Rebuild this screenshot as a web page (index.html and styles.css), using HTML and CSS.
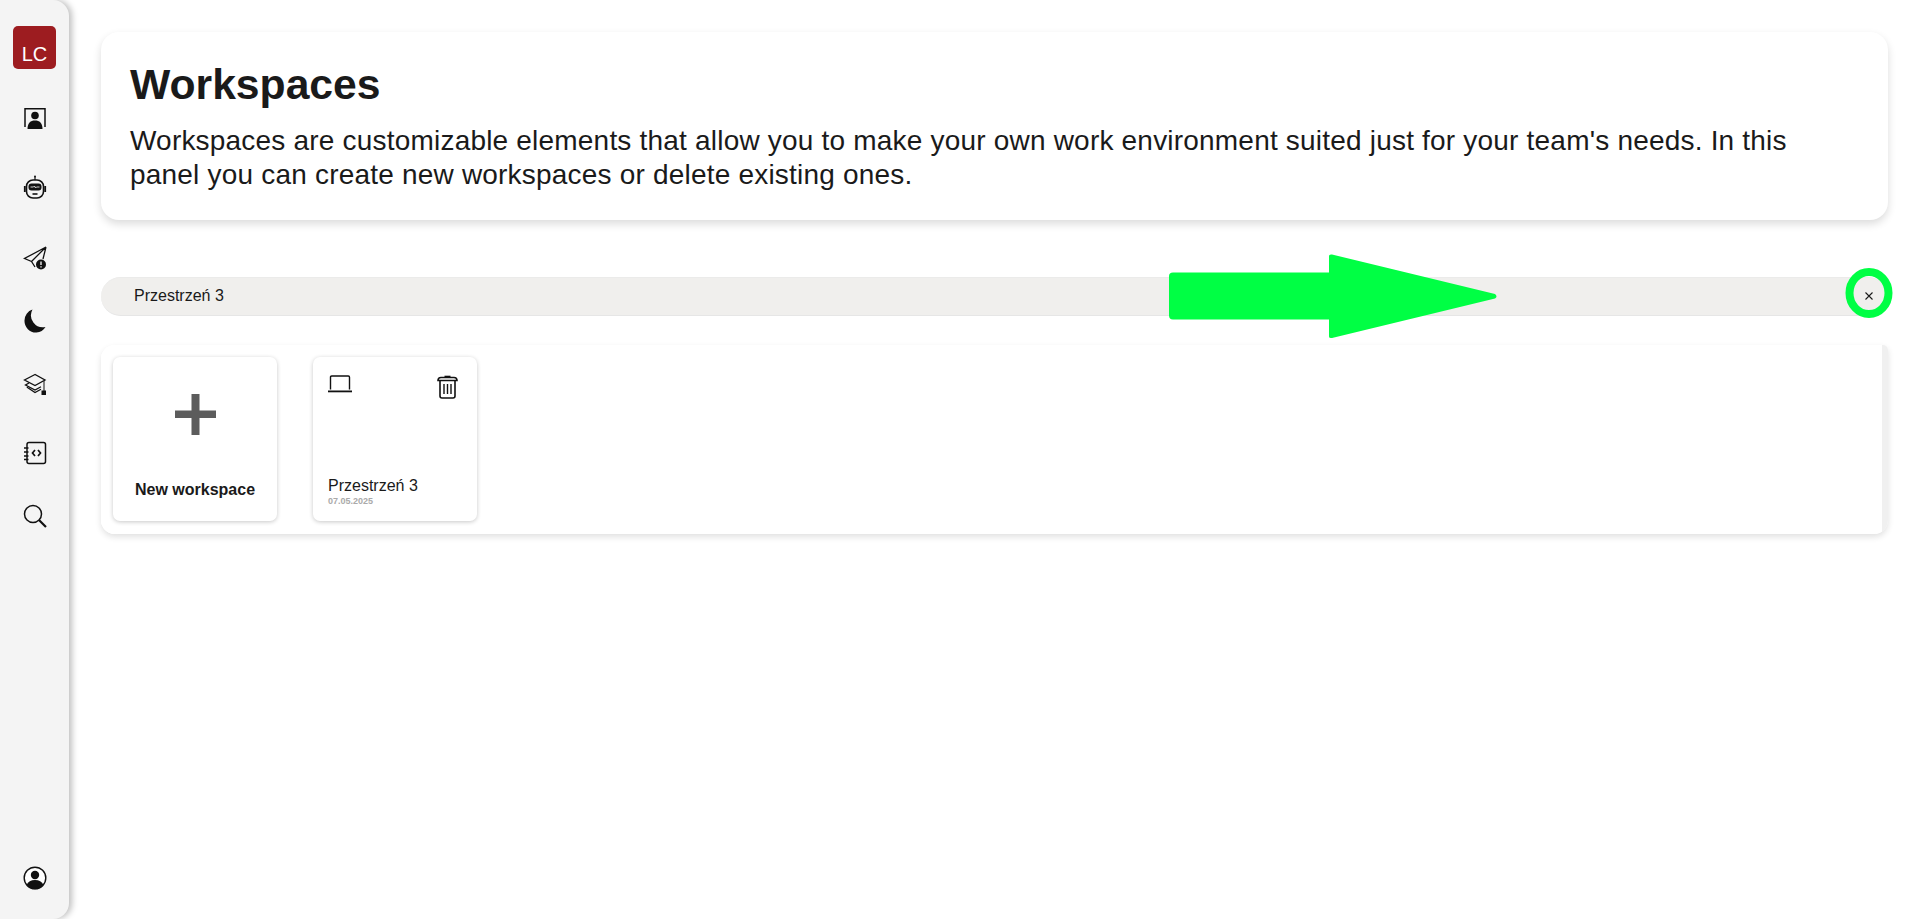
FILE: index.html
```html
<!DOCTYPE html>
<html lang="en">
<head>
<meta charset="utf-8">
<title>Workspaces</title>
<link rel="stylesheet" href="styles.css">
</head>
<body>
<div class="app">
  <nav class="sidebar">
    <div class="nav-top">
      <div class="avatar">LC</div>
      <svg class="nav-icon first" viewBox="0 0 24 24"><path d="M2 21V2.700h20V21" fill="none" stroke="#111" stroke-width="1.500"/><circle cx="12" cy="9.500" r="3.800" fill="#111"/><path d="M4.500 23c0-6 3-8.500 7.500-8.500s7.500 2.500 7.500 8.500z" fill="#111"/></svg>
      <svg class="nav-icon wide" viewBox="0 0 24 24"><circle cx="12" cy="1.500" r="1" fill="#111"/><path d="M12 2v3" stroke="#111" stroke-width="1.200"/><rect x="3.500" y="5" width="17" height="18" rx="6.500" fill="none" stroke="#111" stroke-width="1.600"/><rect x="5.500" y="8.500" width="13" height="7" rx="3" fill="#111"/><path d="M7.500 12h3l1-1 1 2 1-1h3" stroke="#fff" stroke-width=".8" fill="none"/><path d="M9.500 19h5" stroke="#111" stroke-width="1.600"/><path d="M1.800 11v6M22.200 11v6" stroke="#111" stroke-width="1.800"/></svg>
      <svg class="nav-icon wider" viewBox="0 0 24 24"><path d="M23 1 1.500 12.500l7 3 3.500 5.500M23 1 8.500 15.500M23 1l-3 12" fill="none" stroke="#111" stroke-width="1.300"/><circle cx="18" cy="18.500" r="5" fill="#111"/><path d="M18 15.500v3.500M18 20.200v1.300" stroke="#fff" stroke-width="1.300"/></svg>
      <svg class="nav-icon" viewBox="0 0 24 24"><path d="M9.500 .5A11.500 11.500 0 0 0 1.500 11.500a11.500 11.500 0 0 0 12 12 11.500 11.500 0 0 0 9-5.500A12 12 0 0 1 9.500 .5z" fill="#111"/></svg>
      <svg class="nav-icon" viewBox="0 0 24 24"><path d="M12 2.500 1.500 8 12 13.500 22 8z" fill="none" stroke="#111" stroke-width="1.300"/><path d="M6 11 2.500 13 12 18l6-3.200M6 14.500 4.500 15.500 12 20.500l6-3.300" fill="none" stroke="#111" stroke-width="1.300"/><path d="M21 8.500v11" stroke="#111" stroke-width="1"/><rect x="18.500" y="18.500" width="4.500" height="4.500" fill="#111"/></svg>
      <svg class="nav-icon wide" viewBox="0 0 24 24"><rect x="4" y="1.500" width="18.500" height="21" rx="2" fill="none" stroke="#111" stroke-width="1.500"/><path d="M1 7h4.500M1 11h4.500M1 15h4.500M1 18.500h4.500" stroke="#111" stroke-width="1.400"/><path d="M12 9 9.500 12l2.500 3M15 9l2.500 3-2.500 3" fill="none" stroke="#111" stroke-width="1.700"/></svg>
      <svg class="nav-icon" viewBox="0 0 24 24"><circle cx="10" cy="10" r="8.500" fill="none" stroke="#111" stroke-width="1.500"/><path d="m16 16 7 7" stroke="#111" stroke-width="2.200"/></svg>
    </div>
    <svg class="nav-icon nav-user" viewBox="0 0 24 24"><circle cx="12" cy="12" r="10.800" fill="#fff" stroke="#111" stroke-width="1.400"/><circle cx="12" cy="9" r="4.200" fill="#111"/><path d="M3.500 19c1.500-3.500 4.500-5 8.500-5s7 1.500 8.500 5a10.800 10.800 0 0 1-17 0z" fill="#111"/></svg>
  </nav>
  <main class="main">
    <header class="intro">
      <h1>Workspaces</h1>
      <p>Workspaces are customizable elements that allow you to make your own work environment suited just for your team's needs. In this panel you can create new workspaces or delete existing ones.</p>
    </header>
    <div class="filter">
      <span>Przestrzeń 3</span>
      <svg class="clear" viewBox="0 0 10 10"><path d="m1.500 1.500 7 7M8.500 1.500l-7 7" stroke="#1a1a1a" stroke-width="1.100"/></svg>
    </div>
    <section class="panel">
      <div class="panel-body">
        <div class="card card-new">
          <svg class="plus" viewBox="0 0 41 41"><path d="M16.500 0h8v16.500H41v7.500H24.500v17h-8V24H0v-7.500h16.500z" fill="#5c5c5c"/></svg>
          <strong>New workspace</strong>
        </div>
        <div class="card card-item">
          <div class="card-icons">
            <svg class="laptop" viewBox="0 0 24 18"><path d="M2.500 14.500V2.200q0-1.200 1.200-1.200h16.600q1.200 0 1.200 1.200v12.300" fill="none" stroke="#111" stroke-width="1.400"/><path d="M0 15.500h24v1.800H0z" fill="#111"/></svg>
            <svg class="trash" viewBox="0 0 21 24"><path d="M7.500 2.500V.7h6v1.800" fill="#111"/><path d="M1 5.500Q1 2.500 4 2.500h13q3 0 3 3z" fill="none" stroke="#111" stroke-width="1.600"/><path d="M3 6v15q0 2 2 2h11q2 0 2-2V6" fill="none" stroke="#111" stroke-width="1.600"/><path d="M7 9v10M10.500 9v10M14 9v10" stroke="#111" stroke-width="1.400"/></svg>
          </div>
          <div class="card-name">Przestrzeń 3</div>
          <div class="card-date">07.05.2025</div>
        </div>
      </div>
    </section>
  </main>
</div>
<svg class="annot-arrow" viewBox="0 0 329 85"><path d="M4 18.500h156V2q0-2 3-1.500L326 40q3 2.500 0 4.500L163 84q-3 .5-3-1.500V65.500H4q-4 0-4-4V22q0-3.500 4-3.500z" fill="#00ff44"/></svg>
<svg class="annot-ring" viewBox="0 0 48 50"><ellipse cx="24" cy="25" rx="19.500" ry="21" fill="none" stroke="#00ff44" stroke-width="8"/></svg>
</body>
</html>
```

FILE: styles.css
```css
* { box-sizing: border-box; }
html, body { margin: 0; height: 100%; }
body {
  background: #fff;
  color: #1a1a1a;
  font-family: "Liberation Sans", Arial, sans-serif;
  overflow: hidden;
  position: relative;
}
.app { display: flex; height: 919px; }
.sidebar {
  width: 69px;
  flex: none;
  height: 100%;
  background: #f4f4f4;
  border-radius: 0 16px 16px 0;
  box-shadow: 3px 0 6px rgba(0, 0, 0, .25);
  display: flex;
  flex-direction: column;
  align-items: center;
  justify-content: space-between;
  padding: 26px 0 29px;
}
.nav-top {
  display: flex;
  flex-direction: column;
  align-items: center;
  gap: 39px;
}
.avatar {
  width: 43px;
  height: 43px;
  background: #9d1c20;
  border-radius: 5px;
  color: #fff;
  font-size: 20px;
  display: flex;
  align-items: flex-end;
  justify-content: center;
  padding-bottom: 3px;
}
.nav-icon { width: 24px; height: 24px; display: block; }
.nav-icon.first { margin-top: -2px; }
.nav-icon.wide { margin-top: 6px; }
.nav-icon.wider { margin-top: 8px; }
.main {
  flex: 1;
  min-width: 0;
  padding: 32px 32px 0;
}
.intro {
  background: #fff;
  border-radius: 18px;
  box-shadow: 0 4px 8px rgba(0, 0, 0, .14);
  height: 188px;
  padding: 28px 29px;
}
.intro h1 {
  margin: 0;
  font-size: 42.67px;
  line-height: 48px;
  font-weight: 700;
}
.intro p {
  margin: 16px 0 0;
  font-size: 28px;
  line-height: 34px;
  letter-spacing: .2px;
}
.filter {
  margin-top: 57px;
  height: 39px;
  background: #f0efed;
  border-top: 1px solid #ebebea;
  border-bottom: 1px solid #e6e6e6;
  border-radius: 20px;
  display: flex;
  align-items: center;
  justify-content: space-between;
  padding: 0 14px 2px 33px;
  font-size: 16px;
}
.clear { width: 10px; height: 10px; }
.panel {
  margin-top: 29px;
  height: 189px;
  background: linear-gradient(to left, #f0f0f0 6px, #fff 6px);
  border-radius: 14px 5px 14px 14px;
  box-shadow: 0 3px 6px rgba(0, 0, 0, .12);
  padding-right: 6px;
  display: flex;
}
.panel-body {
  flex: 1;
  min-width: 0;
  background: #fff;
  border-radius: 14px 0 12px 14px;
  padding: 12px;
  display: flex;
  gap: 36px;
}
.card {
  width: 164px;
  height: 164px;
  flex: none;
  background: #fff;
  border-radius: 7px;
  box-shadow: 0 1px 4px rgba(0, 0, 0, .22);
}
.card-new {
  display: flex;
  flex-direction: column;
  align-items: center;
  padding-top: 37px;
}
.plus { width: 41px; height: 41px; margin-left: 1px; }
.card-new strong { margin-top: 45px; font-size: 16px; line-height: 20px; }
.card-item { padding: 18px 19px 0 15px; }
.card-icons { display: flex; justify-content: space-between; align-items: flex-start; height: 96px; }
.laptop { width: 24px; height: 18px; }
.trash { width: 21px; height: 24px; }
.card-name { font-size: 16px; line-height: 19px; margin-top: 5px; }
.card-date { font-size: 9px; line-height: 10px; font-weight: 700; color: #aaa; margin-top: 1px; }
.annot-arrow { position: absolute; left: 1169px; top: 254px; width: 329px; height: 85px; }
.annot-ring { position: absolute; left: 1845px; top: 268px; width: 48px; height: 50px; }
```
